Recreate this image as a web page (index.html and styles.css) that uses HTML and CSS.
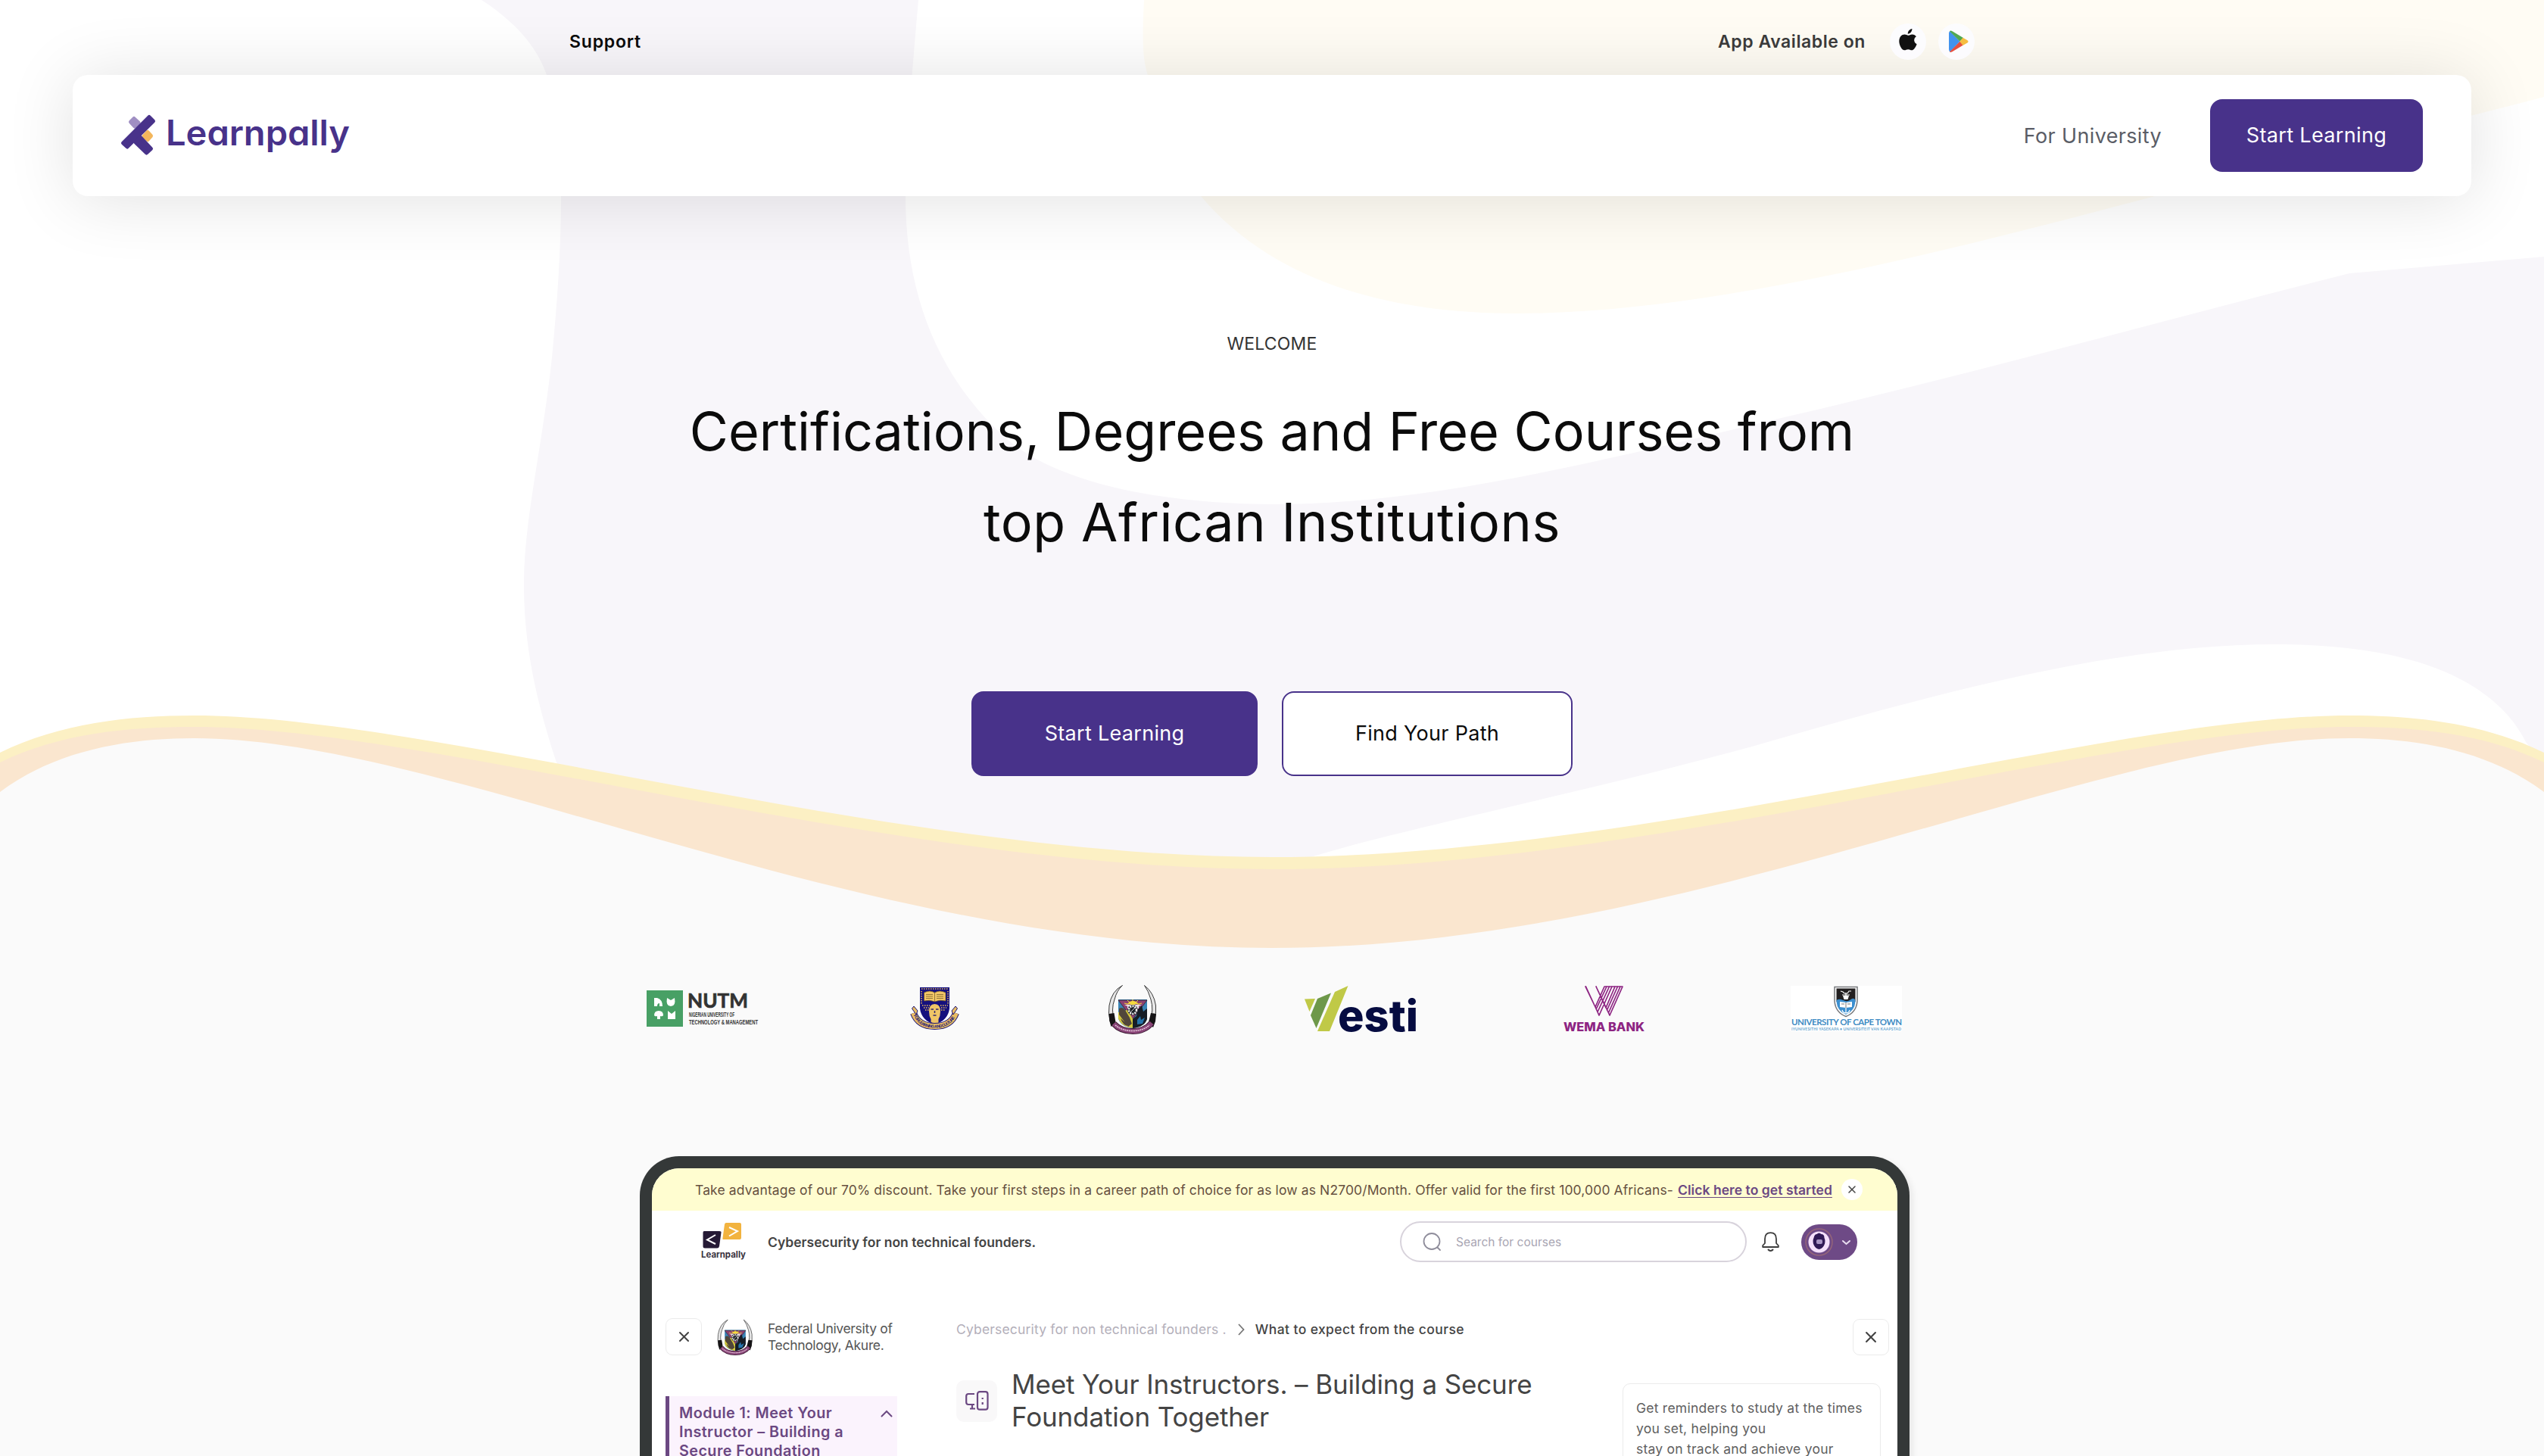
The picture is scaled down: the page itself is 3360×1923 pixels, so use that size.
FILE: index.html
```html
<!DOCTYPE html>
<html lang="en">
<head>
<meta charset="utf-8">
<title>Learnpally</title>
<link rel="stylesheet" href="styles.css">
</head>
<body>
<svg class="backdrop" viewBox="0 0 3360 1923" aria-hidden="true">
  <path fill="#f8f6fa" d="M636 0C690 35 712 70 722 99C736 150 741 205 741 259C741 330 736 400 729 472C715 600 691 690 692 779C693 870 715 945 735 1007L900 1200H1620L1731 1132C1850 1095 2100 1045 2314 986C2570 912 2800 851 3004 851C3171 851 3290 890 3336 980L3360 1010V339L3103 361C2850 425 2600 495 2357 551C2100 613 1880 666 1684 666C1540 666 1400 640 1330 580C1240 500 1196 390 1196 259C1198 170 1206 80 1213 0Z"/>
  <path fill="#fffcf4" d="M1511 0C1508 60 1510 80 1516 99C1530 160 1550 205 1586 259C1680 370 1830 414 2003 414C2250 414 2560 335 2846 259C3050 205 3220 165 3360 128V0Z"/>
  <path fill="#fcf0c4" d="M0 994C80 955 170 945 257 945C570 945 1180 1132 1680 1132C2180 1132 2790 945 3103 945C3190 945 3280 955 3360 994V1300H0Z"/>
  <path fill="#fae6cf" d="M0 1007C80 968 170 960 257 960C570 960 1180 1148 1680 1148C2180 1148 2790 960 3103 960C3190 960 3280 968 3360 1007V1300H0Z"/>
  <path fill="#fafafa" d="M0 1046C75 990 170 975 257 975C590 975 1130 1252 1680 1252C2230 1252 2770 975 3103 975C3190 975 3285 990 3360 1046V1923H0Z"/>
</svg>

<div class="topbar">
  <a class="support">Support</a>
  <div class="apps">
    <span class="apps-label">App Available on</span>
    <span class="store"><svg width="24" height="30" viewBox="0 0 24 30"><path fill="#111" d="M17.4 0C17.6 3 15 6.700 11.800 6.800C11.500 3.700 14.300.3 17.400 0ZM12.200 8.800C13.500 8.800 15 7.400 17.600 7.400C20 7.400 21.800 8.600 22.900 10.200C19 12.500 19.400 18.300 23.600 20.200C22.500 23.500 19.800 28.300 17 28.300C15 28.300 14.500 27.200 12.200 27.200C9.800 27.200 9.200 28.300 7.300 28.300C3.800 28.300.3 21.700.3 16.500C.3 10.900 3.800 7.600 7.400 7.600C9.500 7.600 11 8.800 12.200 8.800Z"/></svg></span>
    <span class="store store-play"><svg width="28" height="30" viewBox="0 0 28 30"><path fill="#4293ee" d="M2.500 1Q1 2 1 4V25Q1 28 2.500 28.500L15.500 14.800Z"/><path fill="#51a852" d="M2 1.200Q3-.2 5.500 1.200L20 10L15.500 14.800Z"/><path fill="#e6503f" d="M2 28.400Q3 29.800 5.500 28.300L20 19.600L15.500 14.800Z"/><path fill="#f5bd41" d="M19.500 9.800L25.500 13.200Q27.500 14.800 25.500 16.400L19.500 19.900L15.500 14.800Z"/></svg></span>
  </div>
</div>

<header class="header">
  <svg class="brand" width="310" height="60" viewBox="155 149 310 60" role="img" aria-label="Learnpally">
    <g stroke-width="5" stroke-linejoin="round">
      <path fill="#a08fc3" stroke="#a08fc3" d="M177 156.500L172.500 161L178 167L183 162Z"/>
      <path fill="#f3b65c" stroke="#f3b65c" d="M195 174.500L199.500 179.500L195 184.500L190 180Z"/>
      <path fill="#48328a" stroke="#48328a" d="M197 154.500L202.500 160L168 194L162.500 189Z"/>
      <path fill="#48328a" stroke="#48328a" d="M185 181L199.500 196.500L193.500 202L179 188Z"/>
    </g>
    <text class="brand-name" x="219" y="192" textLength="243" lengthAdjust="spacingAndGlyphs">Learnpally</text>
  </svg>
  <nav class="nav">
    <a class="nav-link">For University</a>
    <a class="nav-cta">Start Learning</a>
  </nav>
</header>

<main>
  <section class="hero">
    <p class="eyebrow">WELCOME</p>
    <h1 class="headline"><span>Certifications, Degrees and Free Courses from</span><br><span class="headline-end">top African Institutions</span></h1>
    <div class="actions">
      <a class="btn btn-primary">Start Learning</a>
      <a class="btn btn-outline">Find Your Path</a>
    </div>
  </section>

  <section class="partners">
    <svg width="150" height="66" viewBox="854 1300 150 66">
      <rect x="854" y="1308" width="48" height="48" fill="#48a065"/>
      <path fill="#fff" d="M864 1318h4q7 2 7 11h-4v-4q-3 0-3 4h-4zM881 1318l5 3 5-3q2 11-5 11t-5-11zM864 1341q0-6 6-6t6 6q-1 2-4 1v4h-4v-4q-3 1-4-1zM882 1335l5 4 5-4v11h-10z"/>
      <text class="nutm" x="908" y="1331" textLength="80" lengthAdjust="spacingAndGlyphs">NUTM</text>
      <text class="nutm-sub" x="910" y="1343" textLength="60" lengthAdjust="spacingAndGlyphs">NIGERIAN UNIVERSITY OF</text>
      <text class="nutm-sub" x="910" y="1353" textLength="91" lengthAdjust="spacingAndGlyphs">TECHNOLOGY &amp; MANAGEMENT</text>
    </svg>

    <svg width="62" height="66" viewBox="1204 1300 62 66">
      <defs><path id="oau-arc" d="M1206.500 1340Q1213 1357.500 1234.500 1357.500T1262.500 1340"/></defs>
      <path fill="#fff" d="M1211 1337Q1217 1354 1234 1354T1258 1337L1252 1330H1217Z"/>
      <path fill="#15107e" d="M1215 1304H1254V1332Q1252 1348 1234.500 1353Q1217 1348 1215 1332Z"/>
      <path fill="none" stroke="#e8ba5c" stroke-width="1.500" stroke-dasharray="1.500 1.500" d="M1217 1306H1252M1217 1309V1326M1252 1309V1326M1218 1328H1228M1242 1328H1252M1220 1331H1227M1243 1331H1250M1222 1334H1227M1243 1334H1248"/>
      <path fill="#f0c566" stroke="#6b5427" stroke-width=".7" d="M1220.500 1311Q1228 1307 1234.500 1311Q1241 1307 1249 1311V1322Q1241 1320 1234.500 1323Q1228 1320 1220.500 1322ZM1234.500 1311V1323M1223 1313.500h9M1223 1316h9M1237 1313.500h9M1237 1316h9M1223 1318.500h9M1237 1318.500h9"/>
      <path fill="#f0c566" d="M1227 1336Q1227 1326 1234.500 1326T1242 1336Q1242 1342 1239.500 1346V1351Q1234 1352.500 1229.500 1350V1346Q1227 1342 1227 1336Z"/>
      <path fill="none" stroke="#33276b" stroke-width="1.500" d="M1229.500 1333h3.500M1236 1333h3.500M1234.500 1335v3M1232.500 1341h4"/>
      <path fill="none" stroke="#1d1678" stroke-width="9" d="M1206.500 1338Q1213 1355.500 1234.500 1355.500T1262.500 1338"/>
      <path fill="none" stroke="#e9bd62" stroke-width="7" d="M1206.500 1338Q1213 1355.500 1234.500 1355.500T1262.500 1338"/>
      <path fill="#e9bd62" stroke="#1d1678" stroke-width="1" d="M1204.500 1332L1207 1329L1212 1335L1210 1340ZM1264.500 1332L1262 1329L1257 1335L1259 1340Z"/>
      <text class="scroll-dark"><textPath href="#oau-arc" textLength="66" startOffset="1">FOR LEARNING AND CULTURE</textPath></text>
    </svg>

    <svg width="66" height="66" viewBox="1463 1300 66 66">
      <g id="futa">
        <path fill="#3a83b5" d="M1477 1320H1515V1345Q1512 1356 1496 1358Q1480 1356 1477 1345Z"/>
        <path fill="#8d426f" stroke="#2b2230" stroke-width=".8" d="M1477 1321H1515L1496 1346Z"/>
        <path fill="#f4da3e" d="M1488 1327Q1496 1317 1505 1327L1500 1326L1496 1328L1492 1326Z"/>
        <path stroke="#f4da3e" stroke-width="1" d="M1485 1325l4 1M1489 1321l3 3M1496 1320v4M1503 1321l-3 3M1508 1325l-4 1"/>
        <path fill="#e9e2ea" d="M1485 1327h23l-4 2v3h-15v-3z"/>
        <path fill="#d5c93c" d="M1477 1337L1489 1334L1497 1347V1358Q1481 1356 1477 1345Z"/>
        <path fill="#51463a" d="M1478 1332q5-3 8 2t6 10l3 8-5 4-12-16zM1480 1345l11 10q-8 0-11-10z"/>
        <path fill="#171d25" d="M1496 1346l5-4 2-9 5-5 2 8 5-4v14q-3 10-19 12z"/>
        <path fill="#2573ab" d="M1502 1347l4-5 1 5 5-3-3 8-7 1z"/>
        <circle cx="1496" cy="1334" r="6.800" fill="#202329"/><circle cx="1496" cy="1334" r="5" fill="none" stroke="#f4f4f4" stroke-width="2.500" stroke-dasharray="2 1.200"/><path stroke="#ddd" stroke-width="1" d="M1493 1337l6-6"/>
        <path fill="#e6e6e6" stroke="#3b3b3b" stroke-width="1" d="M1482.500 1301.500Q1468 1309 1465 1328Q1463.500 1338 1466 1349L1472 1350Q1467 1333 1472 1320Q1475 1308 1482.500 1301.500ZM1511.500 1301.500Q1524 1311 1526.500 1328Q1527.500 1338 1524.500 1349L1519 1350Q1524 1333 1520 1320Q1517 1309 1511.500 1301.500Z"/>
        <path fill="#161416" d="M1464.500 1339l7-1 2 12-6 6-2-7zM1527 1339l-7-1-3 12 6 7 3-8z"/>
        <path fill="none" stroke="#3a1b33" stroke-width="8" d="M1471 1352Q1480 1362 1496 1362T1521 1351"/>
        <path fill="none" stroke="#8a4578" stroke-width="6" d="M1471 1352Q1480 1362 1496 1362T1521 1351"/>
        <path fill="none" stroke="#e5c9dc" stroke-width="1.500" stroke-dasharray="2 .8" d="M1473 1354Q1482 1361.500 1496 1361.500T1518 1354"/>
      </g>
    </svg>

    <svg width="152" height="66" viewBox="1723 1300 152 66">
      <path fill="#c0c947" d="M1723 1319.500L1737 1319L1729.500 1336Z"/>
      <path fill="#6e984a" d="M1740 1319L1758 1311.500L1738.500 1358L1731 1341Z"/>
      <path fill="#c0c947" d="M1763 1310L1780.500 1302L1756 1362H1740Z"/>
      <text class="vesti" x="1767" y="1361.500" textLength="106" lengthAdjust="spacingAndGlyphs">esti</text>
    </svg>

    <svg width="108" height="66" viewBox="2065 1300 108 66">
      <g fill="none" stroke="#8d2482" stroke-width="1.700" stroke-linecap="round" stroke-linejoin="round">
        <path d="M2094 1303L2107 1330L2119 1303H2143L2126 1341L2108 1303L2121 1331M2094.500 1303L2106 1328M2107 1330L2112 1341L2129 1303M2108.500 1332L2122 1303M2110 1336.500L2125.500 1303M2121 1331L2133 1303M2122.500 1334L2136.500 1303M2124.500 1337.500L2140 1303"/>
      </g>
      <text class="wema" x="2065" y="1362" textLength="107" lengthAdjust="spacingAndGlyphs">WEMA BANK</text>
    </svg>

    <svg width="148" height="66" viewBox="2365 1300 148 66">
      <rect x="2365" y="1302" width="147" height="60" fill="#fff"/>
      <path fill="#fff" stroke="#77797c" stroke-width="1.500" d="M2423 1303.500H2453V1322Q2452 1337 2438 1342.500Q2424 1337 2423 1322Z"/>
      <path fill="#232021" d="M2425.500 1305.500H2450.500V1323H2425.500Z"/>
      <path fill="#3c8fcf" d="M2425.500 1321q3-2 6-1t6 2 7-2 6 1v2q-1 12-12.500 17q-11.500-5-12.500-17z"/>
      <path fill="#fff" d="M2430 1323l8 1 8-1v7l-8 1-8-1zM2434 1315h8l-1.500 5h-5z"/>
      <path fill="none" stroke="#fff" stroke-width="1.200" d="M2431 1309l3 1 2 2h4l2-3h3M2438 1311v4M2433 1314h10M2438 1331v7M2433 1334q1 4 5 4t5-4"/>
      <path fill="none" stroke="#555" stroke-width=".8" d="M2432 1326h4M2440 1326h4M2438 1324v7"/>
      <text class="uct" x="2366" y="1354" textLength="146">UNIVERSITY OF CAPE TOWN</text>
      <text class="uct-sub" x="2366" y="1360.500" textLength="145">IYUNIVESITHI YASEKAPA • UNIVERSITEIT VAN KAAPSTAD</text>
    </svg>
  </section>

  <section class="tablet">
    <div class="promo">
      <span class="promo-text">Take advantage of our 70% discount. Take your first steps in a career path of choice for as low as N2700/Month. Offer valid for the first 100,000 Africans-</span>
      <a class="promo-link">Click here to get started</a>
      <span class="promo-close"><svg width="10" height="10" viewBox="0 0 10 10"><path d="M1 1L9 9M9 1L1 9" stroke="#444" stroke-width="1.500" stroke-linecap="round"/></svg></span>
    </div>

    <div class="appbar">
      <svg width="60" height="50" viewBox="926 1612 60 50">
        <path fill="#251a35" d="M930 1623H950Q953 1623 952.500 1625L950 1643Q949.500 1645.500 947 1645.500H931Q928.500 1645.500 928.500 1643V1625Q928.500 1623 930 1623Z"/>
        <path fill="#f2b33f" d="M959 1612H977Q979 1612 979 1614V1632Q979 1634 977 1634H955Q954 1634 954.500 1632L957 1614Q957.500 1612 959 1612Z"/>
        <path fill="none" stroke="#fff" stroke-width="2" d="M945 1628L934 1634.500L945 1640M963 1618L974 1623L963 1629.500"/>
        <text class="mini-brand" x="926" y="1658" textLength="59" lengthAdjust="spacingAndGlyphs">Learnpally</text>
      </svg>
      <strong class="course">Cybersecurity for non technical founders.</strong>
      <div class="search">
        <svg width="26" height="26" viewBox="0 0 26 26" fill="none" stroke="#8f8d9b" stroke-width="1.800" stroke-linecap="round"><circle cx="12" cy="12.500" r="10.500"/><path d="M19.500 20.500L23 24"/></svg>
        <span class="search-hint">Search for courses</span>
      </div>
      <svg class="bell" width="23" height="27" viewBox="0 0 23 27" fill="none" stroke="#3c3c3c" stroke-width="1.800" stroke-linejoin="round"><path d="M1.200 20V18L4 15V9.500C4 4 7 1.200 11.500 1.200S19 4 19 9.500V15L21.800 18V20Z"/><path d="M8 23Q11.500 27 15 23" stroke-width="2"/></svg>
      <div class="account">
        <svg width="74" height="47" viewBox="0 0 74 47"><circle cx="23.500" cy="23.500" r="17.500" fill="none" stroke="#94647a" stroke-width="1.500"/><circle cx="23.500" cy="23.500" r="14" fill="#f5e0fb"/><path fill="#311a56" d="M16.500 18q1-5 4-5 3-3 6 0 4 0 4 5 2 4 0 9-2 5-7 6-5-1-7-6-2-5 0-9z"/><rect x="20" y="20" width="8" height="6" rx="2" fill="#a994c4"/><path d="M55 22L59.500 26L64 22" fill="none" stroke="#e9def0" stroke-width="2" stroke-linecap="round"/></svg>
      </div>
    </div>

    <div class="workspace">
      <aside class="side">
        <div class="org">
          <span class="square"><svg width="13" height="13" viewBox="0 0 13 13"><path d="M1 1L12 12M12 1L1 12" stroke="#444" stroke-width="2" stroke-linecap="round"/></svg></span>
          <svg width="48" height="48" viewBox="1463 1300 66 66"><use href="#futa"/></svg>
          <p class="org-name"><span>Federal University of</span><br><span>Technology, Akure.</span></p>
        </div>
        <div class="module">
          <p class="module-name"><span>Module 1: Meet Your</span><br><span>Instructor – Building a</span><br><span>Secure Foundation</span></p>
          <svg width="16" height="10" viewBox="0 0 16 10"><path d="M1.500 8.500L8 2L14.500 8.500" fill="none" stroke="#6b4882" stroke-width="2" stroke-linecap="round"/></svg>
        </div>
      </aside>
      <article class="lesson">
        <div class="crumbs">
          <span class="crumb-course">Cybersecurity for non technical founders .</span>
          <svg width="9" height="16" viewBox="0 0 9 16"><path d="M1 1L7.500 8L1 15" fill="none" stroke="#777" stroke-width="1.800"/></svg>
          <span class="crumb-here">What to expect from the course</span>
        </div>
        <div class="lesson-head">
          <span class="lesson-icon"><svg width="31" height="26" viewBox="0 0 31 26" fill="none" stroke="#6b4882" stroke-width="2.200"><path d="M12 4H4Q1.200 4 1.200 7V15Q1.200 18 4 18H12M6 23.500H13M9 18V23"/><rect x="16" y="1.200" width="13.500" height="23.500" rx="3"/><path d="M22.700 9v2M22.700 15v3"/></svg></span>
          <h2 class="lesson-title"><span>Meet Your Instructors. – Building a Secure</span><br><span>Foundation Together</span></h2>
        </div>
      </article>
      <aside class="aside">
        <span class="square square-right"><svg width="14" height="14" viewBox="0 0 13 13"><path d="M1 1L12 12M12 1L1 12" stroke="#444" stroke-width="2" stroke-linecap="round"/></svg></span>
        <p class="reminder"><span>Get reminders to study at the times</span><br><span>you set, helping you</span><br><span>stay on track and achieve your</span></p>
      </aside>
    </div>
  </section>
</main>
</body>
</html>
```
FILE: styles.css
```css
* { box-sizing: border-box; }
body {
  margin: 0;
  height: 1923px;
  overflow: hidden;
  position: relative;
  background: #fff;
  color: #0b0b0b;
  font-family: Inter, "Liberation Sans", sans-serif;
}
p, h1, h2 { margin: 0; font-weight: 400; }
svg { display: block; flex: none; overflow: visible; }
span, a { white-space: nowrap; }
.backdrop { position: absolute; inset: 0; width: 3360px; height: 1923px; z-index: -1; overflow: hidden; }

.topbar {
  width: 1856px;
  height: 99px;
  margin: 0 auto;
  padding-top: 10px;
  display: flex;
  justify-content: space-between;
  align-items: center;
  font-size: 23px;
  font-weight: 600;
}
.support { letter-spacing: .8px; }
.apps { display: flex; align-items: center; gap: 16px; color: #3a3a3a; position: relative; z-index: 1; }
.apps-label { margin-right: 16px; letter-spacing: .56px; }
.store {
  width: 48px;
  height: 48px;
  border-radius: 50%;
  background: rgba(252, 252, 255, .9);
  display: flex;
  align-items: center;
  justify-content: center;
}
.store svg { margin-top: -3px; }
.store-play svg { margin: 0 0 0 6px; }

.header {
  margin: 0 96px;
  height: 160px;
  padding: 0 64px 0 59px;
  border-radius: 20px;
  background: #fff;
  box-shadow: 0 4px 90px rgba(0, 0, 0, .12);
  display: flex;
  align-items: center;
  justify-content: space-between;
}
.brand-name { font-size: 46px; font-weight: 600; fill: #48328a; font-feature-settings: "cv11"; }
.nav { display: flex; align-items: center; gap: 64px; font-size: 27px; letter-spacing: .35px; }
.nav-link { color: #5a5d66; }
.nav-cta {
  width: 281px;
  height: 96px;
  border-radius: 16px;
  background: #48328a;
  color: #fff;
  line-height: 96px;
  text-align: center;
}

.hero { padding-top: 177px; text-align: center; }
.eyebrow { font-size: 23px; line-height: 36px; letter-spacing: .16px; color: #333; }
.headline { margin-top: 38px; font-size: 70px; line-height: 120px; color: #0b0b0b; }
.headline-end { letter-spacing: .6px; }
.actions { margin-top: 163px; display: flex; justify-content: center; gap: 32px; }
.btn { height: 112px; border-radius: 16px; font-size: 27px; line-height: 107px; letter-spacing: .3px; border: 2px solid #48328a; }
.btn-primary { width: 378px; background: #48328a; color: #fff; }
.btn-outline { width: 384px; background: #fff; color: #0b0b0b; }

.partners {
  margin: 275px 0 0 854px;
  display: grid;
  grid-template-columns: 350px 259px 260px 342px 300px 148px;
}
.nutm { font: 700 26.500px Lato, sans-serif; fill: #333; stroke: #333; stroke-width: .7px; }
.nutm-sub { font: 700 8.500px "Liberation Sans", sans-serif; fill: #333; }
.scroll-dark { font: 700 5.500px "Liberation Sans", sans-serif; fill: #1d1678; }
.vesti { font: 800 57px Inter, sans-serif; fill: #060c41; }
.wema { font: 800 15.500px Inter, sans-serif; fill: #8d2482; }
.uct { font: 700 11.500px Lato, sans-serif; fill: #3f8cc4; }
.uct-sub { font: 700 5px Lato, sans-serif; fill: #6aa6d0; }

.tablet {
  margin: 161px 0 0 845px;
  width: 1677px;
  height: 440px;
  border: 16px solid #343838;
  border-bottom: 0;
  border-radius: 52px 52px 0 0;
  background: #fff;
  overflow: hidden;
  box-shadow: 4px 4px 8px rgba(0, 0, 0, .08);
  font-size: 17.500px;
  color: #4a4a4a;
}
.promo {
  height: 56px;
  padding: 0 46px 0 57px;
  background: #fffdd0;
  display: flex;
  align-items: center;
  color: #66503f;
}
.promo-text { letter-spacing: .12px; }
.promo-link { margin-left: 6px; letter-spacing: .06px; color: #6b4882; font-weight: 600; text-decoration: underline; text-underline-offset: 3px; }
.promo-close {
  margin-left: 12px;
  width: 28px;
  height: 28px;
  border-radius: 50%;
  background: #fff;
  display: flex;
  align-items: center;
  justify-content: center;
}
.appbar { height: 82px; padding: 0 53px 0 65px; display: flex; align-items: center; }
.mini-brand { font-size: 12px; font-weight: 700; fill: #3a3340; }
.course { margin-left: 28px; font-weight: 600; color: #444; }
.search {
  margin-left: auto;
  width: 458px;
  height: 54px;
  border: 2px solid #d8d3dc;
  border-radius: 27px;
  padding-left: 28px;
  display: flex;
  align-items: center;
  gap: 18px;
  font-size: 15.500px;
  color: #a9a6b3;
}
.bell { margin-left: 20px; }
.account { margin-left: 29px; width: 74px; height: 47px; border-radius: 24px; background: #6e4a86; }

.workspace { display: grid; grid-template-columns: 384px 880px 352px; padding-left: 18px; }
.side { width: 306px; padding-top: 60px; }
.org { display: flex; align-items: center; height: 49px; }
.square {
  width: 48px;
  height: 49px;
  border: 1px solid #ebebeb;
  border-radius: 9px;
  display: flex;
  align-items: center;
  justify-content: center;
}
.org > svg { margin-left: 20px; }
.org-name { margin-left: 19px; line-height: 22px; letter-spacing: -.33px; color: #555; }
.module {
  margin-top: 54px;
  height: 120px;
  border-left: 5px solid #6b4882;
  background: #fbf3fd;
  padding: 10px 6px 0 13px;
  display: flex;
  justify-content: space-between;
  font-size: 19.800px;
  line-height: 25px;
  letter-spacing: .42px;
  color: #6b4882;
}
.module-name { font-weight: 600; }
.module svg { margin-top: 8px; }
.lesson { padding-top: 62px; }
.crumbs { height: 25px; display: flex; align-items: center; }
.crumb-course { color: #b3afba; letter-spacing: .17px; }
.crumbs svg { margin: 0 14px 0 15px; }
.crumb-here { font-weight: 500; letter-spacing: .4px; color: #444; }
.lesson-head { margin-top: 39px; display: flex; align-items: center; gap: 19px; }
.lesson-icon {
  width: 54px;
  height: 55px;
  border-radius: 10px;
  background: #f9f8f9;
  display: flex;
  align-items: center;
  justify-content: center;
}
.lesson-title { font-size: 35px; line-height: 43px; letter-spacing: -.13px; color: #444; }
.aside { padding-top: 61px; }
.square-right { height: 48px; margin-left: auto; }
.reminder {
  margin-top: 37px;
  width: 341px;
  height: 140px;
  border: 1px solid #ebebeb;
  border-radius: 10px;
  padding: 18px 0 0 17px;
  line-height: 27px;
  letter-spacing: .24px;
  color: #606060;
}
```
